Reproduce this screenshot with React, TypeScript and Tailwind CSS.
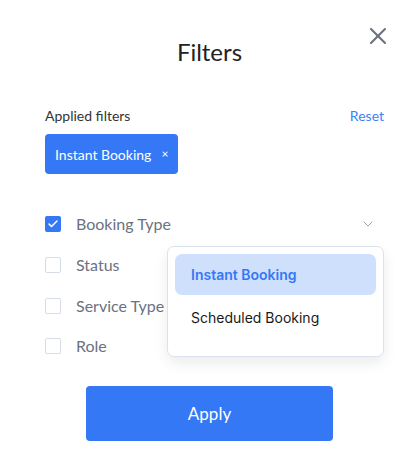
import { X, ChevronDown, Check } from "lucide-react";

const rows = [
  { label: "Booking Type", checked: true },
  { label: "Status", checked: false },
  { label: "Service Type", checked: false },
  { label: "Role", checked: false },
];

export default function App() {
  return (
    <div className="relative w-[419px] h-[472px] bg-white font-['Lato',sans-serif] overflow-hidden">
      <button className="absolute left-[364px] top-[22px] text-[#6b7280]">
        <X size={28} strokeWidth={1.8} />
      </button>

      <h1 className="pt-[36px] text-center text-[24px] leading-[32px] text-[#222] font-normal">Filters</h1>

      <div className="pl-[45px] pr-[35px] mt-[40px]">
        <div className="flex items-center justify-between text-[14px] leading-[16px]">
          <span className="text-[#333]">Applied filters</span>
          <button className="text-[#3b82f6]">Reset</button>
        </div>

        <div className="mt-[10px] flex">
          <div className="flex items-center h-[40px] rounded-[4px] bg-[#3478f6] pl-[10px] pr-[10px] text-white text-[14px]">
            <span>Instant Booking</span>
            <span className="ml-[10px] text-[12px]">×</span>
          </div>
        </div>

        <div className="mt-[30px] flex flex-col">
          {rows.map((r, i) => (
            <div key={r.label} className="flex items-center h-[40.7px] gap-[15px]">
              {r.checked ? (
                <span className="flex items-center justify-center w-[16px] h-[16px] rounded-[2px] bg-[#3478f6]">
                  <Check size={12} strokeWidth={3} className="text-white" />
                </span>
              ) : (
                <span className="w-[16px] h-[16px] rounded-[2px] border border-[#d6dde8]" />
              )}
              <span className="text-[16px] text-[#6b7280]">{r.label}</span>
              {i === 0 ? (
                <ChevronDown size={16} strokeWidth={1.5} className="ml-auto mr-[8px] text-[#a0a6b0]" />
              ) : null}
            </div>
          ))}
        </div>
      </div>

      <div className="flex justify-center mt-[19px]">
        <button className="w-[247px] h-[55px] rounded-[4px] bg-[#3478f6] text-white text-[17px]">Apply</button>
      </div>

      <div className="absolute left-[167px] top-[246px] w-[217px] h-[111px] rounded-[7px] border border-[#dbe2ef] bg-white shadow-[0_6px_14px_rgba(0,0,0,0.08)] p-[7px] font-['Inter',sans-serif]">
        <div className="flex items-center h-[41px] rounded-[7px] bg-[#cfe0fc] pl-[16px] text-[14px] font-semibold text-[#3478f6]">
          Instant Booking
        </div>
        <div className="flex items-center h-[45px] pl-[16px] text-[14px] text-[#1a1a1a]">Scheduled Booking</div>
      </div>
    </div>
  );
}
